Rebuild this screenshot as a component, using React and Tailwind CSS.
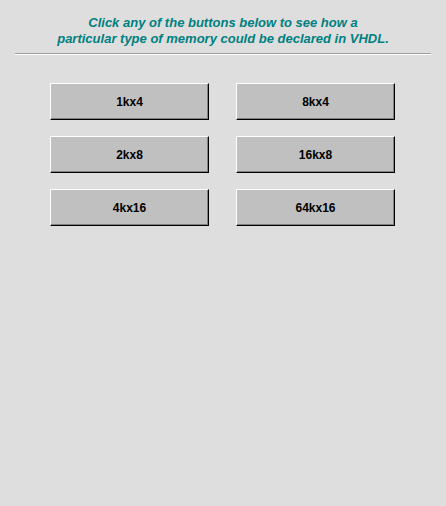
import React from 'react';

const sizes = [
    ['1kx4', '8kx4'],
    ['2kx8', '16kx8'],
    ['4kx16', '64kx16'],
];

function MemButton({ label }) {
    return (
        <button className="w-[159px] h-[37px] bg-[#c0c0c0] border border-t-white border-l-white border-r-black border-b-black shadow-[inset_-1px_-1px_0_#808080] text-[12px] font-bold text-black flex items-center justify-center">
            {label}
        </button>
    );
}

export default function App() {
    return (
        <div className="w-[446px] h-[506px] bg-[#dedede] font-['Liberation_Sans',Arial,sans-serif]">
            {/* Header */}
            <div className="pt-[15px] text-center text-[13px] leading-[16px] font-bold italic text-[#008080]">
                <p>Click any of the buttons below to see how a</p>
                <p>particular type of memory could be declared in VHDL.</p>
            </div>
            <div className="mx-[15px] mt-[6px] h-[2px] border-t border-t-[#a0a0a0] border-b border-b-white" />

            {/* Buttons */}
            <div className="flex flex-col gap-[16px] mt-[28px] pl-[50px]">
                {sizes.map((row) => (
                    <div key={row[0]} className="flex gap-[27px]">
                        {row.map((s) => (
                            <MemButton key={s} label={s} />
                        ))}
                    </div>
                ))}
            </div>
        </div>
    );
}
